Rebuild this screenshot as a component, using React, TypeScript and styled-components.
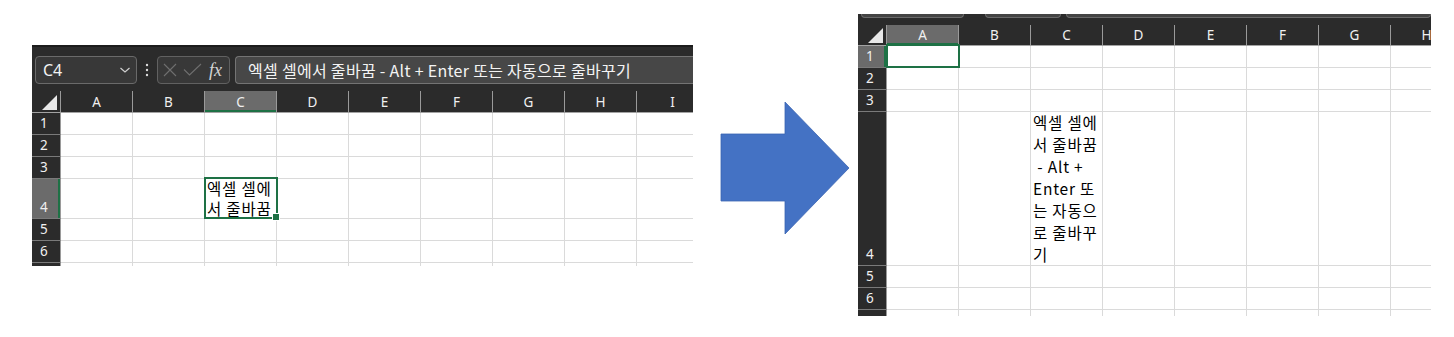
import React from "react";
import styled, { createGlobalStyle } from "styled-components";

const UI_FONT = `"Noto Sans", "Noto Sans CJK KR", sans-serif`;
const CELL_FONT = `"Noto Sans CJK KR", "Noto Sans", sans-serif`;
const GREEN = "#1e7145";
const HEADER_BG = "#2b2b2b";
const HEADER_ACTIVE = "#6b6b6b";
const GRID_LINE = "#dadada";

const COLUMNS = ["A", "B", "C", "D", "E", "F", "G", "H", "I"];
const FORMULA = "엑셀 셀에서 줄바꿈 - Alt + Enter 또는 자동으로 줄바꾸기";

type RowSpec = { label: string; height: number };

// the last row is only partly in view, so its number stays hidden
const LEFT_ROWS: RowSpec[] = [
  { label: "1", height: 22 },
  { label: "2", height: 22 },
  { label: "3", height: 22 },
  { label: "4", height: 40 },
  { label: "5", height: 22 },
  { label: "6", height: 22 },
  { label: "", height: 22 },
];

const RIGHT_ROWS: RowSpec[] = [
  { label: "1", height: 22 },
  { label: "2", height: 22 },
  { label: "3", height: 22 },
  { label: "4", height: 154 },
  { label: "5", height: 22 },
  { label: "6", height: 22 },
  { label: "", height: 22 },
];

const GlobalStyle = createGlobalStyle`
  html, body {
    margin: 0;
    padding: 0;
    background: #ffffff;
  }
  body {
    font-family: ${UI_FONT};
  }
`;

interface GridProps {
  columns: string[];
  rows: RowSpec[];
  active: { row: number; col: number };
  text: { row: number; col: number; lines: string[] };
  lineHeight: number;
  headerHeight: number;
  headerPad: number;
  handle: boolean;
}

function Grid({ columns, rows, active, text, lineHeight, headerHeight, headerPad, handle }: GridProps) {
  return (
    <>
      <HeaderRow $height={headerHeight} $pad={headerPad}>
        <Corner>
          <svg width="15" height="15" viewBox="0 0 15 15">
            <polygon points="15,0 15,15 0,15" fill="#e8e8e8" />
          </svg>
        </Corner>
        {columns.map((c, i) => (
          <ColHeader key={c} $active={i === active.col}>
            {c}
          </ColHeader>
        ))}
      </HeaderRow>
      {rows.map((r, ri) => (
        <Row key={ri} $height={r.height}>
          <RowHeader $active={ri === active.row}>{r.label}</RowHeader>
          {columns.map((c, ci) => {
            const selected = ri === active.row && ci === active.col;
            const hasText = ri === text.row && ci === text.col;
            return (
              <Cell key={c} $selected={selected}>
                {hasText && (
                  <CellText $lh={lineHeight}>
                    {text.lines.map((l, li) => (
                      <Line key={li}>{l}</Line>
                    ))}
                  </CellText>
                )}
                {selected && <Selection>{handle && <Handle />}</Selection>}
              </Cell>
            );
          })}
        </Row>
      ))}
    </>
  );
}

export default function App() {
  return (
    <>
      <GlobalStyle />
      <Page>
        <Panel $width={661} $height={221} $top={45} $left={0}>
          <FormulaBar>
            <NameBox>
              <NameText>C4</NameText>
              <svg width="12" height="8" viewBox="0 0 12 8">
                <polyline points="1.5,2 6,6 10.5,2" fill="none" stroke="#d0d0d0" strokeWidth="1.2" />
              </svg>
            </NameBox>
            <DotsSlot>
              <svg width="4" height="14" viewBox="0 0 4 14">
                <circle cx="2" cy="2" r="1.2" fill="#dcdcdc" />
                <circle cx="2" cy="7" r="1.2" fill="#dcdcdc" />
                <circle cx="2" cy="12" r="1.2" fill="#dcdcdc" />
              </svg>
            </DotsSlot>
            <FxBox>
              <svg width="16" height="16" viewBox="0 0 16 16">
                <path d="M2 2 L14 14 M14 2 L2 14" stroke="#6f6f6f" strokeWidth="1.1" />
              </svg>
              <svg width="19" height="14" viewBox="0 0 19 14">
                <polyline points="1,6.5 6.5,12 18,1" fill="none" stroke="#6f6f6f" strokeWidth="1.1" />
              </svg>
              <FxText>fx</FxText>
            </FxBox>
            <FormulaInput>{FORMULA}</FormulaInput>
          </FormulaBar>
          <Grid
            columns={COLUMNS}
            rows={LEFT_ROWS}
            active={{ row: 3, col: 2 }}
            text={{ row: 3, col: 2, lines: ["엑셀 셀에", "서 줄바꿈"] }}
            lineHeight={20}
            headerHeight={24}
            headerPad={2}
            handle
          />
        </Panel>

        <ArrowSlot>
          <svg width="130" height="134" viewBox="-1 -1 130 134">
            <polygon
              points="0,32 64,32 64,0 128,66 64,132 64,99 0,99"
              fill="#4472c4"
              stroke="#3b65b3"
              strokeWidth="0.8"
            />
          </svg>
        </ArrowSlot>

        <Panel $width={573} $height={302} $top={14} $left={8}>
          <TopStrip>
            <StripBox $offset={3} $width={101} />
            <StripBox $offset={21} $width={74} />
            <StripBox $offset={5} $grow />
          </TopStrip>
          <Grid
            columns={COLUMNS.slice(0, 8)}
            rows={RIGHT_ROWS}
            active={{ row: 0, col: 0 }}
            text={{
              row: 3,
              col: 2,
              lines: ["엑셀 셀에", "서 줄바꿈", " - Alt +", "Enter 또", "는 자동으", "로 줄바꾸", "기"],
            }}
            lineHeight={22}
            headerHeight={21}
            headerPad={0}
            handle={false}
          />
        </Panel>
      </Page>
    </>
  );
}

// ===== Styled Components =====

const Page = styled.div`
  display: flex;
  align-items: flex-start;
  padding-left: 32px;
  width: 1454px;
  height: 337px;
  box-sizing: border-box;
  overflow: hidden;
`;

const Panel = styled.div<{ $width: number; $height: number; $top: number; $left: number }>`
  flex-shrink: 0;
  width: ${({ $width }) => $width}px;
  height: ${({ $height }) => $height}px;
  margin-top: ${({ $top }) => $top}px;
  margin-left: ${({ $left }) => $left}px;
  background: ${HEADER_BG};
  overflow: hidden;
  display: flex;
  flex-direction: column;
`;

const FormulaBar = styled.div`
  flex-shrink: 0;
  height: 44px;
  box-sizing: border-box;
  border-top: 2px solid #1c1c1c;
  padding: 9px 0 0 3px;
  display: flex;
  align-items: flex-start;
  background: #2b2b2b;
`;

const NameBox = styled.div`
  width: 102px;
  height: 28px;
  box-sizing: border-box;
  border: 1px solid #6a6a6a;
  border-radius: 4px;
  background: #383838;
  display: flex;
  align-items: center;
  justify-content: space-between;
  padding: 0 5px 0 7px;
  flex-shrink: 0;
`;

const NameText = styled.span`
  font-family: ${UI_FONT};
  font-size: 16px;
  color: #f2f2f2;
`;

const DotsSlot = styled.div`
  width: 20px;
  height: 28px;
  display: flex;
  align-items: center;
  justify-content: center;
  flex-shrink: 0;
`;

const FxBox = styled.div`
  width: 73px;
  height: 28px;
  box-sizing: border-box;
  border: 1px solid #616161;
  border-radius: 4px;
  background: #383838;
  display: flex;
  align-items: center;
  gap: 5px;
  padding-left: 4px;
  flex-shrink: 0;
`;

const FxText = styled.span`
  font-family: "Liberation Serif", serif;
  font-style: italic;
  font-size: 18px;
  color: #d4d4d4;
  margin-left: 2px;
  line-height: 1;
`;

const FormulaInput = styled.div`
  margin-left: 5px;
  flex: 1;
  height: 28px;
  box-sizing: border-box;
  border: 1px solid #747474;
  border-right: none;
  border-radius: 4px 0 0 4px;
  background: #474747;
  padding-left: 12px;
  display: flex;
  align-items: center;
  font-family: ${CELL_FONT};
  font-size: 16px;
  letter-spacing: 0.3px;
  color: #f4f4f4;
  white-space: nowrap;
  overflow: hidden;
`;

const TopStrip = styled.div`
  flex-shrink: 0;
  height: 11px;
  display: flex;
  align-items: flex-start;
  overflow: hidden;
`;

const StripBox = styled.div<{ $offset: number; $width?: number; $grow?: boolean }>`
  margin-left: ${({ $offset }) => $offset}px;
  ${({ $width }) => ($width ? `width: ${$width}px;` : "")}
  ${({ $grow }) => ($grow ? "flex: 1;" : "flex-shrink: 0;")}
  height: 3px;
  border: 1px solid #6a6a6a;
  border-top: none;
  border-radius: 0 0 4px 4px;
  background: #444444;
`;

const HeaderRow = styled.div<{ $height: number; $pad: number }>`
  flex-shrink: 0;
  display: flex;
  height: ${({ $height }) => $height}px;
  box-sizing: border-box;
  padding-top: ${({ $pad }) => $pad}px;
  border-bottom: 1px solid #a3a3a3;
  background: ${HEADER_BG};
`;

const Corner = styled.div`
  width: 29px;
  flex-shrink: 0;
  box-sizing: border-box;
  border-right: 1px solid #9a9a9a;
  display: flex;
  align-items: flex-end;
  justify-content: flex-end;
  padding: 0 3px 2px 0;
`;

const ColHeader = styled.div<{ $active: boolean }>`
  width: 72px;
  flex-shrink: 0;
  box-sizing: border-box;
  border-right: 1px solid #9a9a9a;
  background: ${({ $active }) => ($active ? HEADER_ACTIVE : "transparent")};
  box-shadow: ${({ $active }) => ($active ? `inset 0 -2px 0 ${GREEN}` : "none")};
  display: flex;
  align-items: center;
  justify-content: center;
  font-family: ${UI_FONT};
  font-size: 13.5px;
  color: #f0f0f0;
`;

const Row = styled.div<{ $height: number }>`
  flex-shrink: 0;
  display: flex;
  height: ${({ $height }) => $height}px;
`;

const RowHeader = styled.div<{ $active: boolean }>`
  width: 29px;
  flex-shrink: 0;
  box-sizing: border-box;
  border-right: 1px solid #9a9a9a;
  border-bottom: 1px solid #7a7a7a;
  background: ${({ $active }) => ($active ? HEADER_ACTIVE : HEADER_BG)};
  box-shadow: ${({ $active }) => ($active ? `inset -2px 0 0 ${GREEN}` : "none")};
  display: flex;
  align-items: flex-end;
  padding: 0 0 1px 8px;
  font-family: ${UI_FONT};
  font-size: 13.5px;
  line-height: 20px;
  color: #f0f0f0;
`;

const Cell = styled.div<{ $selected: boolean }>`
  width: 72px;
  flex-shrink: 0;
  box-sizing: border-box;
  border-right: 1px solid ${GRID_LINE};
  border-bottom: 1px solid ${GRID_LINE};
  background: #ffffff;
  position: ${({ $selected }) => ($selected ? "relative" : "static")};
  display: flex;
  flex-direction: column;
  justify-content: flex-end;
  padding-left: 2px;
`;

const CellText = styled.div<{ $lh: number }>`
  font-family: ${CELL_FONT};
  font-size: 15.5px;
  letter-spacing: 0.8px;
  line-height: ${({ $lh }) => $lh}px;
  color: #000000;
`;

const Line = styled.div`
  white-space: pre;
`;

const Selection = styled.div`
  position: absolute;
  top: -2px;
  left: -1px;
  right: -2px;
  bottom: -1px;
  border: 2px solid ${GREEN};
  z-index: 2;
  pointer-events: none;
`;

const Handle = styled.div`
  position: absolute;
  right: -4px;
  bottom: -4px;
  width: 6px;
  height: 6px;
  background: ${GREEN};
  border: 1px solid #ffffff;
`;

const ArrowSlot = styled.div`
  flex-shrink: 0;
  margin: 101px 0 0 27px;
  line-height: 0;
`;
